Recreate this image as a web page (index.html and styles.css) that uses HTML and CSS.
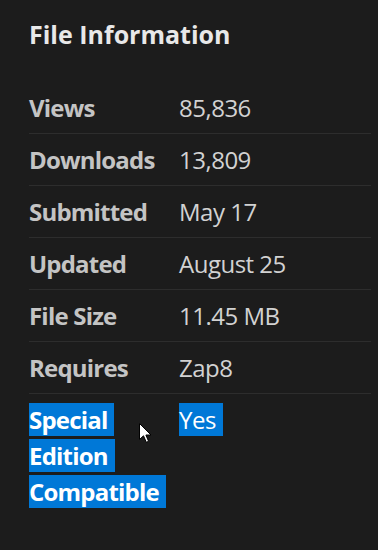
FILE: index.html
```html
<!DOCTYPE html>
<html lang="en">
<head>
    <meta charset="UTF-8">
    <meta name="viewport" content="width=device-width, initial-scale=1.0">
    <title>File Information</title>
    <link rel="stylesheet" href="styles.css">
</head>
<body>
    <div class="panel">
        <h2 class="panel-title">File Information</h2>
        <dl class="info-list">
            <div class="info-row">
                <dt>Views</dt>
                <dd>85,836</dd>
            </div>
            <div class="info-row">
                <dt>Downloads</dt>
                <dd>13,809</dd>
            </div>
            <div class="info-row">
                <dt>Submitted</dt>
                <dd>May 17</dd>
            </div>
            <div class="info-row">
                <dt>Updated</dt>
                <dd>August 25</dd>
            </div>
            <div class="info-row">
                <dt>File Size</dt>
                <dd>11.45 MB</dd>
            </div>
            <div class="info-row">
                <dt>Requires</dt>
                <dd>Zap8</dd>
            </div>
            <div class="info-row">
                <dt><span class="selected">Special Edition Compatible</span></dt>
                <dd><span class="selected">Yes</span></dd>
            </div>
        </dl>
    </div>

    <!-- mouse pointer sitting over the selection -->
    <svg class="cursor" width="13" height="21" viewBox="0 0 13 21">
        <path d="M0.5 0.5 L0.5 16.5 L4.5 12.8 L7.3 19.3 L9.6 18.3 L6.9 12 L12 12 Z" fill="#fff" stroke="#000" stroke-width="1"/>
    </svg>
</body>
</html>
```

FILE: styles.css
```css
/* File information panel, dark theme */
body {
    margin: 0;
    padding: 0;
    background-color: #1c1c1c;
    font-family: 'Open Sans', 'Noto Sans', sans-serif;
    position: relative;
    height: 550px;
    overflow: hidden;
}

.panel {
    padding: 16px 7px 0 29px;
}

.panel-title {
    margin: 0;
    font-size: 25px;
    font-weight: 700;
    line-height: 36px;
    color: #e8e8e8;
}

.info-list {
    margin: 30px 0 0 0;
    padding: 0;
}

.info-row {
    display: grid;
    grid-template-columns: 150px 1fr;
    padding: 8px 0 7px 0;
    border-bottom: 1px solid #2d2d2d;
    font-size: 24px;
    line-height: 36px;
}

.info-row:last-child {
    border-bottom: none;
}

.info-row dt {
    margin: 0;
    padding-right: 10px;
    font-weight: 700;
    letter-spacing: -0.8px;
    color: #c4c4c4;
}

.info-row dd {
    margin: 0;
    letter-spacing: -0.5px;
    color: #d2d2d2;
}

/* text selection look, each wrapped line gets its own trailing space */
.selected {
    background-color: #0078d7;
    color: #fff;
    padding-right: 7px;
    -webkit-box-decoration-break: clone;
    box-decoration-break: clone;
}

.cursor {
    position: absolute;
    left: 139px;
    top: 423px;
}
```
